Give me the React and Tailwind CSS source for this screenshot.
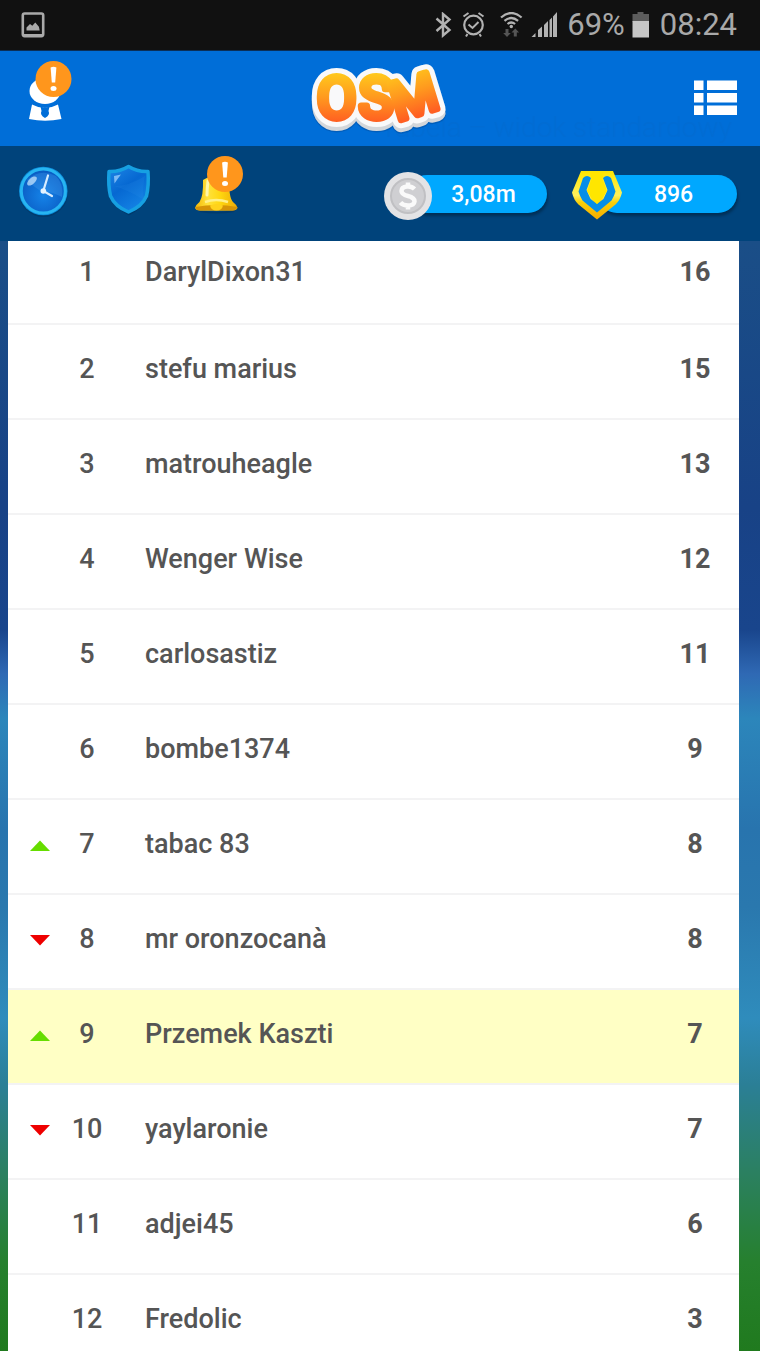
import React from "react";
import clsx from "clsx";

const players = [
  { rank: 1, name: "DarylDixon31", points: 16 },
  { rank: 2, name: "stefu marius", points: 15 },
  { rank: 3, name: "matrouheagle", points: 13 },
  { rank: 4, name: "Wenger Wise", points: 12 },
  { rank: 5, name: "carlosastiz", points: 11 },
  { rank: 6, name: "bombe1374", points: 9 },
  { rank: 7, name: "tabac 83", points: 8, move: "up" },
  { rank: 8, name: "mr oronzocanà", points: 8, move: "down" },
  { rank: 9, name: "Przemek Kaszti", points: 7, move: "up", me: true },
  { rank: 10, name: "yaylaronie", points: 7, move: "down" },
  { rank: 11, name: "adjei45", points: 6 },
  { rank: 12, name: "Fredolic", points: 3 },
];

const StatusBar = () => (
  <div className="flex h-[51px] shrink-0 items-center justify-between border-b border-[#0b2f57] bg-[#111111] pr-[23px] pl-[21px] text-[31px] leading-[34px] text-[#a9a9a9]">
    <svg className="h-[26px] w-6" viewBox="0 0 24 26" fill="none">
      <rect x="1.8" y="1.5" width="20.4" height="22.6" rx="1.8" stroke="#a9a9a9" strokeWidth="2.6" />
      <path d="M2 23.5h20" stroke="#a9a9a9" strokeWidth="3" />
      <path d="M5.5 18.5v-3l3.5-3.6 2.3 1.8 3-3.2 3.6 4.2.8 3.8z" fill="#a9a9a9" />
    </svg>

    <div className="flex items-center">
      <svg className="h-[26px] w-[125px]" viewBox="434 12 125 26" fill="none" stroke="#b2b2b2">
        {/* bluetooth */}
        <path d="M436.5 18.5 449.5 30 443 35.5V14l6.5 5.5L436.5 31" strokeWidth="2.4" />
        {/* alarm */}
        <circle cx="473.5" cy="25" r="9.3" strokeWidth="2.2" />
        <path d="M468.5 24.5l4 3.5 6-6M463.5 16.5l5-3.5M483.5 16.5l-5-3.5M467.5 34l-1.5 2.5M479.5 34l1.5 2.5" strokeWidth="2" />
        {/* wifi */}
        <path d="M501 17.5q10.3-9 20.6 0M504.5 20.8q6.8-5.6 13.6 0M507.5 24q3.8-3 7.6 0" strokeWidth="2.2" />
        <circle cx="511.3" cy="26.5" r="1.7" fill="#b2b2b2" stroke="none" />
        <path d="M505.5 29h3v4h2.3l-3.8 4-3.8-4h2.3zM513.8 36.5h3v-4h2.3l-3.8-4-3.8 4h2.3z" fill="#555555" stroke="none" />
        {/* signal */}
        <path d="M531.5 37l4-4v4zM538 37v-7l4-3.5V37zM544 37V25l4-4v16zM549.5 37V20l2.5-2.5V37zM553 37V16.5l4-4.5V37z" fill="#b2b2b2" stroke="none" />
      </svg>
      <span className="ml-2">69%</span>
      <svg className="ml-[7px] h-[26px] w-[18px]" viewBox="0 0 18 26">
        <path d="M5.5 0h6v2H17v8H.5V2h5z" fill="#5c5c5c" />
        <path d="M.5 9H17v16.5H.5z" fill="#c6c6c6" />
      </svg>
      <span className="ml-[10px]">08:24</span>
    </div>
  </div>
);

const AlertBadge = ({ cx, cy }) => (
  <g>
    <circle cx={cx} cy={cy} r="18" fill="#ff961c" />
    <path d={`M${cx - 2.9} ${cy - 11.5}q2.9-1.5 5.8 0l-1.2 15h-3.4z`} fill="#fff" />
    <ellipse cx={cx} cy={cy + 9.5} rx="3" ry="2.5" fill="#fff" />
  </g>
);

const Logo = () => (
  <svg className="h-[95px] w-40" viewBox="300 51 160 95" role="img" aria-label="OSM">
    <defs>
      <linearGradient id="osmFill" gradientUnits="userSpaceOnUse" x1="0" y1="72" x2="0" y2="122">
        <stop offset="0" stopColor="#ffcb1c" />
        <stop offset="0.5" stopColor="#ff9a1e" />
        <stop offset="1" stopColor="#ff5f22" />
      </linearGradient>
      <g id="osmText" fontFamily="Roboto" fontWeight="400" strokeLinejoin="round" strokeLinecap="round">
        <text x="317" y="118" fontSize="57">O</text>
        <text x="359" y="118" fontSize="57">S</text>
        <text x="397" y="121" fontSize="53" transform="rotate(-17 397 121)">M</text>
      </g>
    </defs>
    <use href="#osmText" y="5" fill="#00438c" stroke="#00438c" strokeWidth="18" opacity="0.35" />
    <use href="#osmText" y="4" fill="#d3d6da" stroke="#d3d6da" strokeWidth="17" />
    <use href="#osmText" fill="#f9f9fa" stroke="#f9f9fa" strokeWidth="17" />
    <ellipse cx="337.5" cy="98" rx="12" ry="15" fill="#f9f9fa" />
    <use href="#osmText" fill="url(#osmFill)" stroke="url(#osmFill)" strokeWidth="7" />
  </svg>
);

const TopNav = () => (
  <header className="relative flex h-[95px] shrink-0 items-center justify-between bg-[#006ed8] pr-[23px] pl-[17px]">
    <button type="button" aria-label="Profile">
      <svg className="h-[95px] w-[60px]" viewBox="17 51 60 95">
        <ellipse cx="45" cy="91" rx="15.5" ry="13" fill="#fff" />
        <path d="M32 104.5q13 7 26 0l3.5 14.5q-16.5 3.5-32.5 0z" fill="#fff" />
        <path d="M40.5 106.5l4.5 1.5 4.5-1.5-1 4.5q2 4-3.5 7-5.5-3-3.5-7z" fill="#006ed8" />
        <AlertBadge cx={53.5} cy={79} />
      </svg>
    </button>
    <p className="absolute right-7 bottom-0 text-[28px] leading-9 font-light text-[#026cd3]" aria-hidden="true">
      Tabela – widok standardowy
    </p>
    <div className="absolute inset-x-0 top-0 flex justify-center">
      <Logo />
    </div>
    <button type="button" aria-label="Menu">
      <svg className="h-[38px] w-[43px]" viewBox="0 0 43 38" fill="#fff">
        <path d="M0 .5h9.5V10H0zM13 .5h30V10H13zM0 13h9.5v9.5H0zM13 13h30v9.5H13zM0 25.5h9.5V35H0zM13 25.5h30V35H13z" />
      </svg>
    </button>
  </header>
);

const ClockIcon = () => (
  <svg className="h-[95px] w-[52px]" viewBox="17 146 52 95">
    <defs>
      <radialGradient id="clockFace" cx="0.5" cy="0.6" r="0.55">
        <stop offset="0" stopColor="#1583e8" />
        <stop offset="1" stopColor="#0a5dc4" />
      </radialGradient>
    </defs>
    <circle cx="43.5" cy="192.5" r="24.5" fill="#00315e" opacity="0.5" />
    <circle cx="43.3" cy="191" r="24.3" fill="#0d8fdc" />
    <circle cx="43.3" cy="191" r="22" fill="url(#clockFace)" stroke="#27b5f2" strokeWidth="3" />
    <path d="M27 180q13-12 29-4 8 8 6 21-12-6-20-5-8-5-15-12z" fill="#4aa3f2" opacity="0.3" />
    <ellipse cx="32" cy="181" rx="6" ry="3" transform="rotate(-42 32 181)" fill="#cfe9ff" opacity="0.7" />
    <path d="M48 175.5 43.3 191 52 196" fill="none" stroke="#d6ecff" strokeWidth="2.2" strokeLinecap="round" />
    <circle cx="43.3" cy="191" r="2.8" fill="#e4f3ff" />
  </svg>
);

const ShieldIcon = () => (
  <svg className="h-[95px] w-[52px]" viewBox="103 146 52 95">
    <defs>
      <linearGradient id="shieldFill" x1="0" y1="0" x2="0.6" y2="1">
        <stop offset="0" stopColor="#1e86e6" />
        <stop offset="0.5" stopColor="#0668d2" />
        <stop offset="1" stopColor="#1482e4" />
      </linearGradient>
    </defs>
    <path d="M128.5 167q9 6 21 4.5 1 17-2 27-5 10-18.5 17-13.5-7-18.5-17-3-10-2-27 11 1.5 20-4.5z" fill="#00315e" opacity="0.5" />
    <path
      d="M128.5 166.5q9 5.5 19.5 5 1 14-1.5 24.5-4.5 10.5-18 16-13.5-5.5-18-16-2.5-10.5-1.5-24.5 10.5.5 19.5-5z"
      fill="url(#shieldFill)"
      stroke="#16a0e2"
      strokeWidth="3.5"
      strokeLinejoin="round"
    />
    <path d="M114 176l7-1.5q-4 5-6.5 9z" fill="#a9d6ff" opacity="0.7" />
    <path d="M114 186q14 4 30 14-2-12 1-24-16 10-31 10z" fill="#3b9bee" opacity="0.12" />
  </svg>
);

const BellIcon = () => (
  <svg className="h-[95px] w-[52px]" viewBox="189 146 52 95" overflow="visible">
    <defs>
      <linearGradient id="bellFill" x1="0" y1="0" x2="1" y2="0">
        <stop offset="0" stopColor="#f3b606" />
        <stop offset="0.3" stopColor="#ffe23c" />
        <stop offset="0.6" stopColor="#ffd60f" />
        <stop offset="1" stopColor="#eda906" />
      </linearGradient>
    </defs>
    <path d="M196 208q20 8 42 0l-4 4q-17 3-34 0z" fill="#00315e" opacity="0.5" />
    <path d="M203 180q13-8 26 0 0 18 4 22 4 3 4.5 6-1 2.5-5 2.5H200q-4 0-5-2.5.5-3 4.5-6 4-6 3.5-22z" fill="url(#bellFill)" />
    <path d="M195.5 207q20.5-4 42 0-1 3.5-5 3.5H200q-4 0-4.5-3.5z" fill="#d69408" />
    <path d="M210 205.5q6.5-3 13 0-1 5-6.5 5t-6.5-5z" fill="#ffd21c" />
    <path d="M205 202q11-4 23 0" fill="none" stroke="#fff08a" strokeWidth="2.5" />
    <path d="M208 181q-1 8-1 14" fill="none" stroke="#fff6a8" strokeWidth="3" strokeLinecap="round" />
    <AlertBadge cx={225} cy={174} />
  </svg>
);

const CoinIcon = () => (
  <svg className="z-10 h-[52px] w-12" viewBox="0 -3 48 52">
    <circle cx="24" cy="25" r="24" fill="#e3e3e5" />
    <circle cx="24" cy="25" r="17" fill="#cfcfd2" stroke="#c0c0c3" strokeWidth="2" />
    <path d="M30.5 18q-3-3-7.5-2.5-5.5.5-5.5 4.5 0 3.5 6.5 5t6.5 5.5q-.5 4-6.5 4-5 0-7.5-3M24 11.5v4M24 34v4.5" fill="none" stroke="#fafafa" strokeWidth="4.5" strokeLinejoin="round" />
  </svg>
);

const GemIcon = () => (
  <svg className="z-10 h-[52px] w-[50px]" viewBox="0 -2 50 52">
    <defs>
      <linearGradient id="gemEdge" x1="0" y1="0" x2="0" y2="1">
        <stop offset="0" stopColor="#ffe500" />
        <stop offset="0.5" stopColor="#fff15c" />
        <stop offset="0.65" stopColor="#f8cf08" />
        <stop offset="1" stopColor="#f6ac00" />
      </linearGradient>
    </defs>
    <path d="M9 1h32l9 21.5q-2 8-6.5 12L25 49.5 6.5 34.5Q2 30.5 0 22.5z" fill="url(#gemEdge)" />
    <path d="M11 8 6.5 21.5q1.5 5 4 9L25 42.5l14.5-12q2.5-4 4-9L39 8q-4-4-8 0l4.5 12-4 9L25 34l-6.5-5-4-9L19 8q-4-4-8 0z" fill="#058ee8" />
    <path d="M18 2h14l-1.5 7 4.5 12-4 6.5-6 6.5-6-6.5-4-6.5 4.5-12z" fill="#ffe600" />
  </svg>
);

const Balance = ({ icon, value }) => (
  <div className="flex items-center">
    {icon}
    <span className="-ml-6 h-[38px] w-[139px] rounded-full bg-[#00a8ff] pl-3 text-center text-[23px] leading-10 font-medium text-white shadow-[1px_3px_3px_rgba(0,0,0,0.3)]">
      {value}
    </span>
  </div>
);

const SubNav = () => (
  <div className="flex h-[95px] shrink-0 items-center justify-between bg-[#00437b] pr-[23px] pl-[17px]">
    <div className="flex gap-[34px]">
      <button type="button" aria-label="Timers">
        <ClockIcon />
      </button>
      <button type="button" aria-label="Club">
        <ShieldIcon />
      </button>
      <button type="button" aria-label="Notifications">
        <BellIcon />
      </button>
    </div>
    <div className="flex gap-[25px]">
      <Balance icon={<CoinIcon />} value="3,08m" />
      <Balance icon={<GemIcon />} value="896" />
    </div>
  </div>
);

const Move = ({ direction }) => (
  <svg className="mx-auto h-[11px] w-5" viewBox="0 0 20 11" role="img" aria-label={direction}>
    {direction === "up" ? (
      <path d="M0 11 10 .5 20 11z" fill="#66dd00" />
    ) : (
      <path d="M0 0h20L10 10.5z" fill="#ee0000" />
    )}
  </svg>
);

const Standings = () => (
  <table className="w-full table-fixed border-collapse bg-white text-[27px] leading-8 font-medium text-[#555555]">
    <colgroup>
      <col className="w-16" />
      <col className="w-[30px]" />
      <col />
      <col className="w-[88px]" />
    </colgroup>
    <tbody>
      {players.map((p, i) => (
        <tr
          key={p.rank}
          className={clsx(
            "align-top shadow-[inset_0_-2px_0_#f3f3f4]",
            i === 0 ? "h-[84px] *:pt-[15px]" : "h-[95px] *:pt-7",
            p.me && "bg-[#ffffc5]"
          )}
        >
          <td>
            {p.move && (
              <div className="pt-3">
                <Move direction={p.move} />
              </div>
            )}
          </td>
          <td>
            <div className="flex justify-center">{p.rank}</div>
          </td>
          <td className="truncate pl-[43px]">{p.name}</td>
          <td className="text-center font-bold">{p.points}</td>
        </tr>
      ))}
    </tbody>
  </table>
);

export default function App() {
  return (
    <div className="flex h-screen flex-col overflow-hidden font-['Roboto',sans-serif]">
      <StatusBar />
      <TopNav />
      <SubNav />
      <main className="min-h-0 flex-1 overflow-hidden bg-[linear-gradient(to_bottom,#1a4e87_0%,#184286_24%,#19458c_35%,#2f69b4_39%,#2c86bb_43%,#2874ae_53%,#2a78ae_60%,#2f8cbc_70%,#2b7f96_76%,#2b8060_84%,#26802e_92%,#207a1e_100%)] pr-[21px] pl-2">
        <Standings />
      </main>
    </div>
  );
}
